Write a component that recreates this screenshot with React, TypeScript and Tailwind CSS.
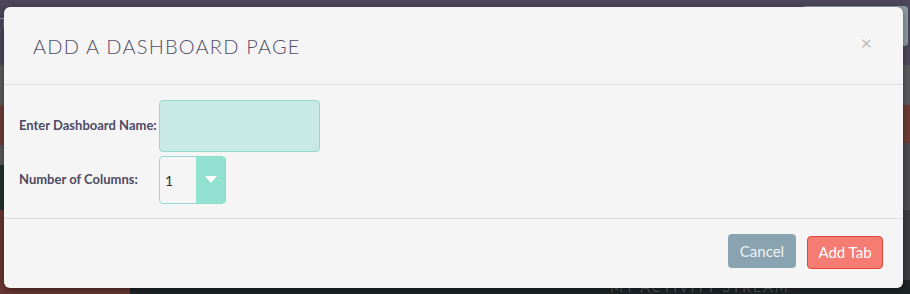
import React from "react";

export default function App() {
  return (
    <div className="relative w-[910px] h-[294px] overflow-hidden bg-[#4b4659]" style={{ fontFamily: "Lato, 'Open Sans', sans-serif" }}>
      {/* dimmed page behind the modal */}
      <div className="flex h-full w-full">
        <div className="flex flex-col w-[130px]">
          <div className="h-[65px] bg-[#4b4659] text-[#8aa0b0] text-[14px] pt-[12px] pl-[0px]">T</div>
          <div className="h-[40px] bg-[#5a5a5c]" />
          <div className="h-[40px] bg-[#6d3b37]" />
          <div className="h-[20px] bg-[#58585a]" />
          <div className="h-[45px] bg-[#23302f]" />
          <div className="flex-1 bg-[#673632]" />
        </div>
        <div className="flex flex-col flex-1">
          <div className="h-[65px] bg-[#4b4659]" />
          <div className="h-[40px] bg-[#58585a]" />
          <div className="h-[38px] bg-[#6c3a36]" />
          <div className="h-[67px] bg-[#4d4d50]" />
          <div className="h-[70px] bg-[#3d3d40]" />
          <div className="flex-1 bg-[#1f2427] flex items-start pl-[480px] gap-3 text-[#55595c] text-[14px] tracking-[2px] leading-none">
            <span>MY ACTIVITY STREAM</span>
          </div>
        </div>
      </div>
      {/* light button behind at top right */}
      <div className="absolute left-[802px] top-[6px] w-[106px] h-[40px] rounded bg-[#8c9ca2]" />

      {/* modal */}
      <div className="absolute left-[4px] top-[7px] w-[899px] h-[281px] rounded-[6px] bg-[#f5f5f5] flex flex-col shadow-[0_2px_6px_rgba(0,0,0,0.4)]">
        <div className="h-[78px] flex items-center justify-between pl-[29px] pr-[31px] border-b border-[#dcdcdc]">
          <h2 className="text-[20px] font-light tracking-[1.2px] text-[#534e68] leading-none">ADD A DASHBOARD PAGE</h2>
          <span className="text-[20px] text-[#bdbdbd] leading-none mb-[7px]">×</span>
        </div>
        <div className="h-[134px] flex flex-col gap-[4px] pt-[15px] pl-[15px] border-b border-[#dcdcdc]">
          <div className="flex items-center">
            <label className="w-[140px] text-[13px] font-bold text-[#4f4a63]">Enter Dashboard Name:</label>
            <div className="w-[161px] h-[52px] rounded-[4px] bg-[#c9eae4] border border-[#8fdccb]" />
          </div>
          <div className="flex items-center">
            <label className="w-[140px] text-[13px] font-bold text-[#4f4a63]">Number of Columns:</label>
            <div className="w-[67px] h-[48px] rounded-[4px] border border-[#8fdccb] flex overflow-hidden">
              <div className="w-[36px] flex items-center pl-[5px] text-[14px] text-[#333]">1</div>
              <div className="flex-1 bg-[#92e0cf] flex items-center justify-center">
                <svg width="12" height="8" viewBox="0 0 12 8"><path d="M0 0 L12 0 L6 7 Z" fill="#ffffff" /></svg>
              </div>
            </div>
          </div>
        </div>
        <div className="flex-1 flex justify-end items-start gap-[11px] pr-[20px] pt-[15px]">
          <button className="w-[68px] h-[34px] rounded-[4px] bg-[#8aa3b0] text-[#eef2f4] text-[15px]">Cancel</button>
          <button className="mt-[2px] w-[76px] h-[33px] rounded-[4px] bg-[#f47c72] border border-[#e0463d] text-white text-[15px]">Add Tab</button>
        </div>
      </div>
    </div>
  );
}
